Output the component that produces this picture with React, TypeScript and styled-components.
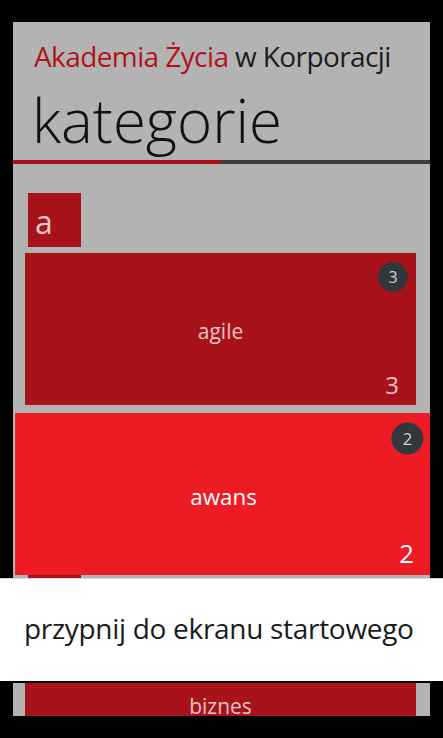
import styled, { createGlobalStyle } from "styled-components";

const GlobalStyle = createGlobalStyle`
  html, body {
    margin: 0;
    padding: 0;
    background: #000000;
  }
  * {
    box-sizing: border-box;
  }
`;

type Kategoria = { nazwa: string; liczba: number; wcisnieta?: boolean };
type Grupa = { litera: string; kategorie: Kategoria[] };

const grupy: Grupa[] = [
  {
    litera: "a",
    kategorie: [
      { nazwa: "agile", liczba: 3 },
      { nazwa: "awans", liczba: 2, wcisnieta: true },
    ],
  },
  {
    litera: "b",
    kategorie: [{ nazwa: "biznes", liczba: 4 }],
  },
];

function App() {
  return (
    <Ekran>
      <GlobalStyle />
      <Panel>
        <Naglowek>
          <Tytul>
            <span className="tytul__akcent">Akademia Życia</span> w Korporacji
          </Tytul>
          <Pivot>kategorie</Pivot>
        </Naglowek>
        <Podkreslenie>
          <span className="podkreslenie__aktywne" />
          <span className="podkreslenie__reszta" />
        </Podkreslenie>
        <Lista>
          {grupy.map((grupa) => (
            <GrupaSekcja key={grupa.litera}>
              <LiteraKafelek>{grupa.litera}</LiteraKafelek>
              {grupa.kategorie.map((k) => (
                <Kafelek key={k.nazwa} $wcisniety={k.wcisnieta}>
                  <Odznaka>{k.liczba}</Odznaka>
                  <span className="kafelek__nazwa">{k.nazwa}</span>
                  <span className="kafelek__liczba">{k.liczba}</span>
                </Kafelek>
              ))}
            </GrupaSekcja>
          ))}
        </Lista>
      </Panel>
      <MenuKontekstowe>
        <span>przypnij do ekranu startowego</span>
      </MenuKontekstowe>
    </Ekran>
  );
}

const Ekran = styled.div`
  position: relative;
  width: 443px;
  height: 738px;
  padding: 22px 13px 22px 13px;
  background: #000000;
  overflow: hidden;
  font-family: "Open Sans", "Noto Sans", sans-serif;
`;

const Panel = styled.main`
  height: 694px;
  background: #b3b3b3;
  overflow: hidden;
  display: flex;
  flex-direction: column;
  & > * {
    flex-shrink: 0;
  }
`;

const Naglowek = styled.header`
  padding: 16px 0 0 21px;
  display: flex;
  flex-direction: column;
`;

const Tytul = styled.h1`
  margin: 0;
  font-size: 28px;
  font-weight: 400;
  line-height: 36px;
  letter-spacing: -0.6px;
  white-space: nowrap;
  color: #1c1c1c;
  .tytul__akcent {
    color: #b0131c;
  }
`;

const Pivot = styled.h2`
  margin: 6px 0 0 -2px;
  font-size: 60px;
  font-weight: 300;
  line-height: 80px;
  color: #111111;
`;

const Podkreslenie = styled.div`
  display: flex;
  height: 4px;
  .podkreslenie__aktywne {
    width: 208px;
    background: #a8121a;
  }
  .podkreslenie__reszta {
    flex: 1;
    background: #3c3c3c;
  }
`;

const Lista = styled.section`
  padding: 29px 14px 0 12px;
  display: flex;
  flex-direction: column;
  gap: 5px;
`;

const GrupaSekcja = styled.div`
  display: flex;
  flex-direction: column;
  gap: 6px;
`;

const LiteraKafelek = styled.div`
  width: 53px;
  height: 54px;
  margin-left: 3px;
  background: #a8121a;
  color: #e6c6c6;
  font-size: 32px;
  font-weight: 400;
  line-height: 1;
  display: flex;
  align-items: flex-end;
  padding: 0 0 9px 7px;
`;

const Kafelek = styled.div<{ $wcisniety?: boolean }>`
  position: relative;
  height: 152px;
  flex-shrink: 0;
  background: ${(p) => (p.$wcisniety ? "#ed1c24" : "#a8131b")};
  color: ${(p) => (p.$wcisniety ? "#ffffff" : "#e8c4c4")};
  display: flex;
  align-items: center;
  justify-content: center;
  z-index: ${(p) => (p.$wcisniety ? 2 : 0)};
  transform: ${(p) =>
    p.$wcisniety ? "translate(3px, 7px) scale(1.066)" : "none"};
  .kafelek__nazwa {
    font-size: 21px;
    margin-top: 4px;
  }
  .kafelek__liczba {
    position: absolute;
    right: 17px;
    bottom: 8px;
    font-size: 24px;
    line-height: 1;
  }
`;

const Odznaka = styled.span`
  position: absolute;
  top: 9px;
  right: 8px;
  width: 30px;
  height: 30px;
  border-radius: 50%;
  background: #31373a;
  color: #d0d0d0;
  font-size: 16px;
  display: flex;
  align-items: center;
  justify-content: center;
`;

const MenuKontekstowe = styled.nav`
  position: absolute;
  left: 0;
  right: 0;
  top: 578px;
  height: 105px;
  background: #ffffff;
  border-top: 1px solid #d8d8d8;
  border-bottom: 2px solid #000000;
  display: flex;
  align-items: center;
  padding: 0 0 4px 24px;
  z-index: 5;
  span {
    font-size: 28px;
    font-weight: 400;
    color: #1a1a1a;
    letter-spacing: -0.3px;
    white-space: nowrap;
  }
`;

export default App;
